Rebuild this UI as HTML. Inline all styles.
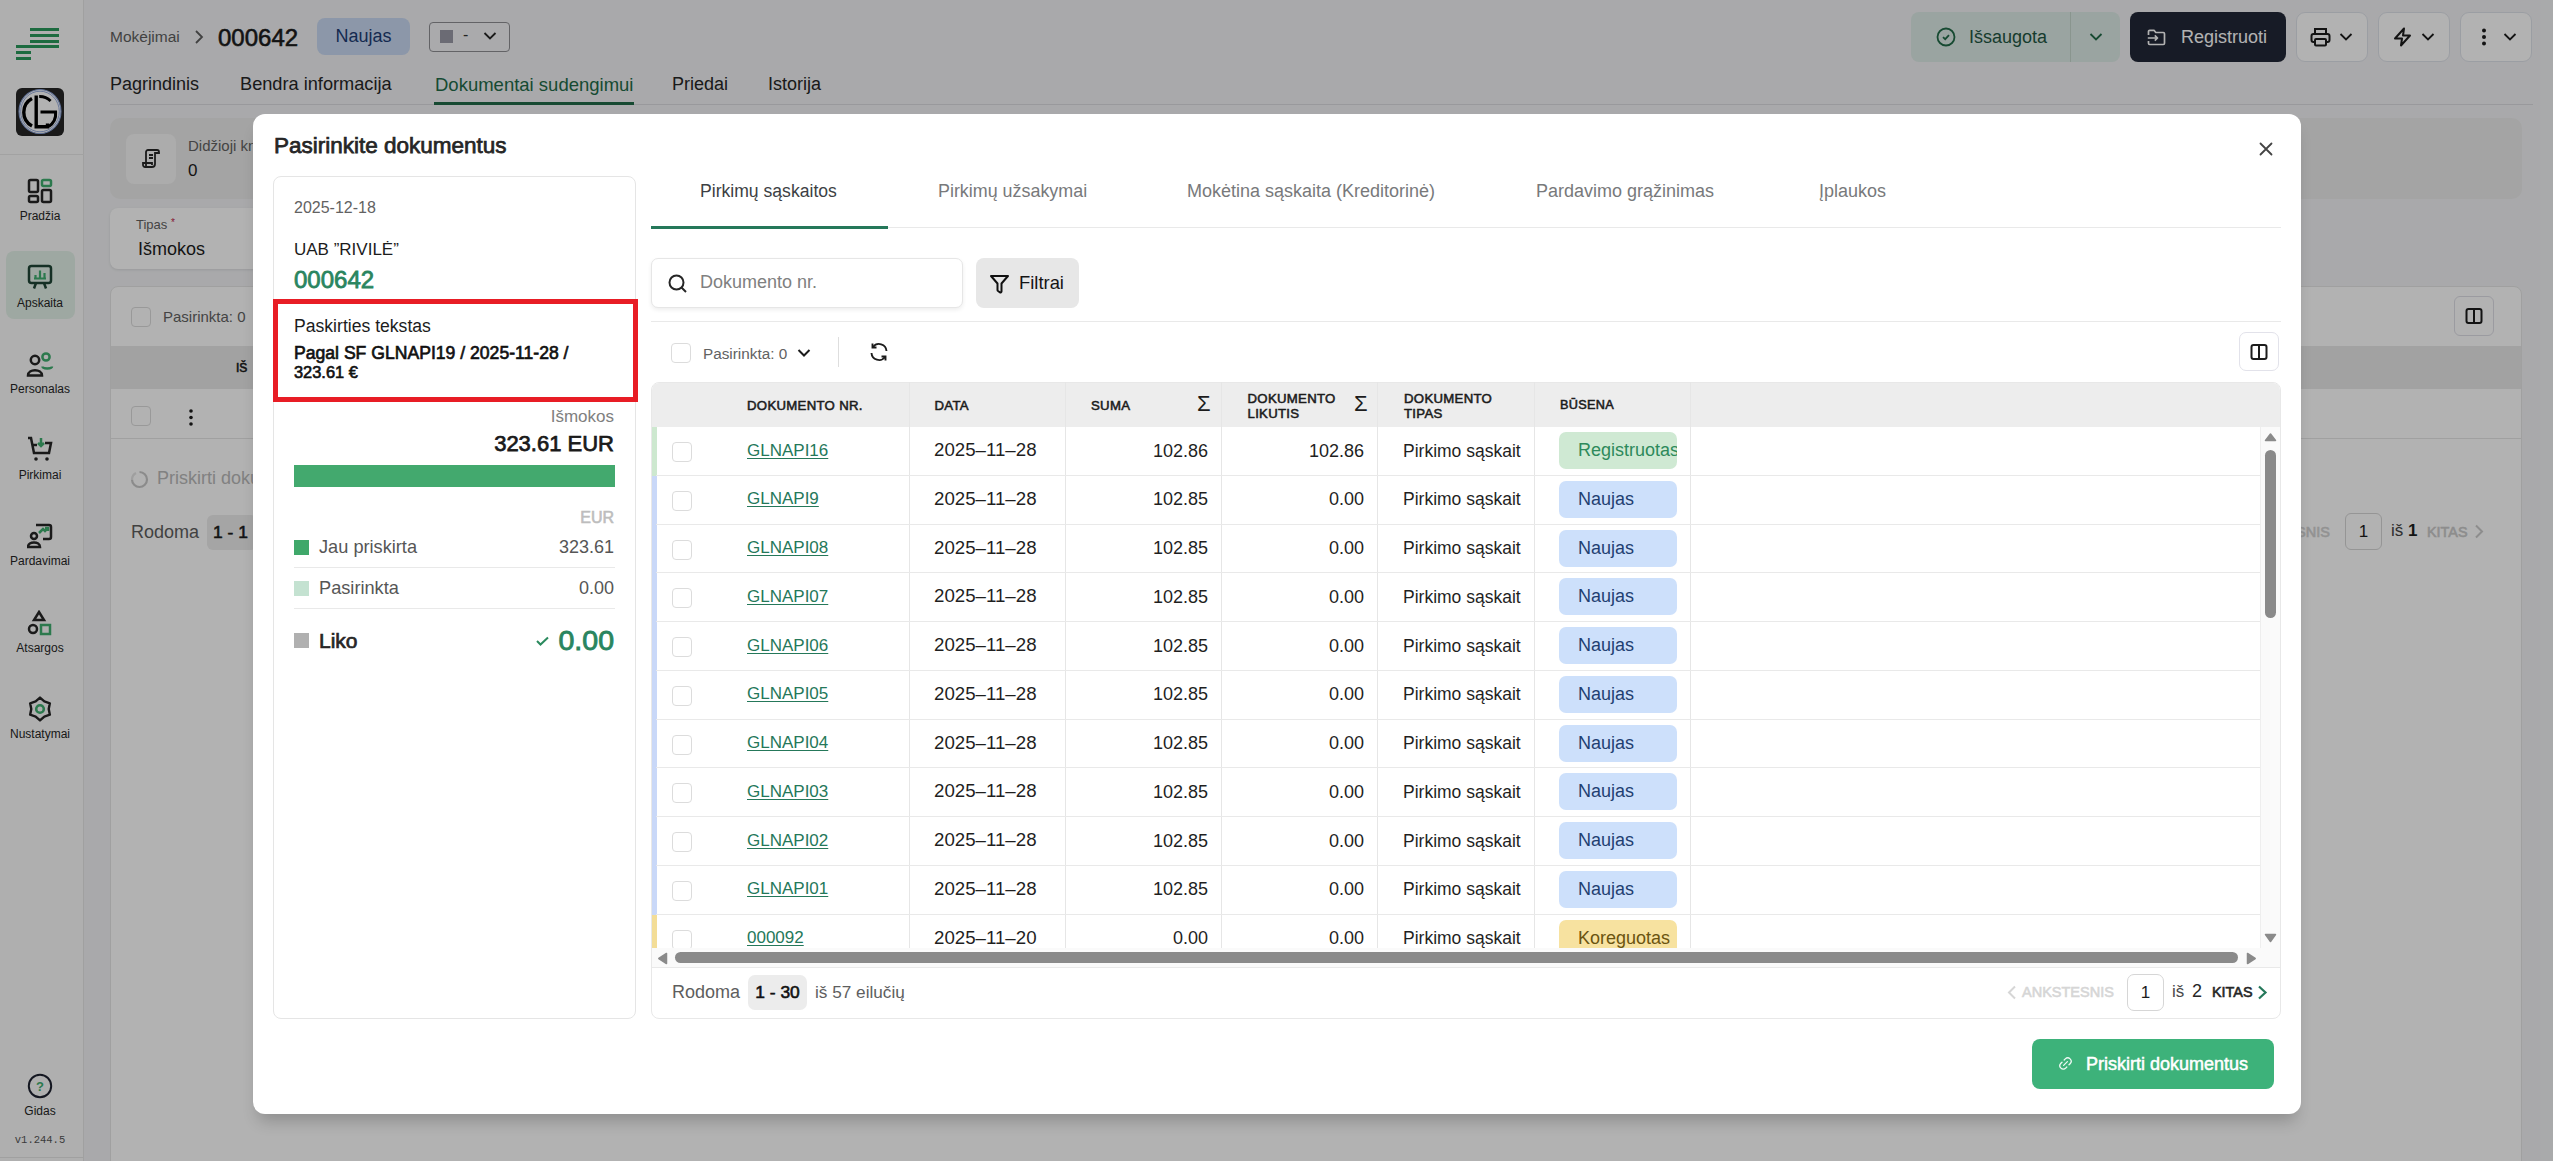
<!DOCTYPE html>
<html><head><meta charset="utf-8">
<style>
*{box-sizing:border-box;margin:0;padding:0}
html,body{width:2553px;height:1161px;overflow:hidden}
body{font-family:"Liberation Sans",sans-serif;background:#f2f3f5;position:relative;color:#1c1c1c}
.a{position:absolute;white-space:nowrap}
#side{left:0;top:0;width:84px;height:1161px;background:#fbfbfb;border-right:1px solid #e6e6e6}
.sl{font-size:12px;color:#262626;text-align:center;width:80px;left:0}
#overlay{left:0;top:0;width:2553px;height:1161px;background:rgba(0,0,0,0.3)}
#modal{left:253px;top:114px;width:2048px;height:1000px;background:#fff;border-radius:12px;box-shadow:0 12px 16px -5px rgba(0,0,0,.2)}
.card{background:#fff;border:1px solid #e5e5e5;border-radius:8px}
.hd{font-size:13.2px;color:#1c1c1c;letter-spacing:.3px;-webkit-text-stroke-width:0.55px}
.cell{font-size:17px;color:#1f1f1f}
.lnk{color:#25785a;text-decoration:underline;text-underline-offset:2px;text-decoration-thickness:1px}
.cb{width:20px;height:20px;border:1.5px solid #dcdcdc;border-radius:4px;background:#fff}
.badge{width:118px;height:37px;border-radius:7px;font-size:18px;padding-left:19px;line-height:37px;overflow:hidden}
.nj{background:#cfe0fb;color:#1d3d73}
.vl{width:1px;background:#e6e6e6}
.hl{height:1px;background:#e9e9e9}
</style></head>
<body>
<!-- ============ BACKGROUND PAGE ============ -->

<div class="a" id="side">
  <!-- logo -->
  <div class="a" style="left:30.3px;top:28px;width:28.6px;height:3px;background:#2a9a5c"></div>
  <div class="a" style="left:30.3px;top:34px;width:28.6px;height:3px;background:#2a9a5c"></div>
  <div class="a" style="left:30.3px;top:39.7px;width:28.6px;height:3px;background:#2a9a5c"></div>
  <div class="a" style="left:16px;top:45.3px;width:43px;height:3px;background:#2a9a5c"></div>
  <div class="a" style="left:16px;top:51px;width:14.7px;height:3px;background:#2a9a5c"></div>
  <div class="a" style="left:16px;top:56.8px;width:14.7px;height:3px;background:#2a9a5c"></div>
  <!-- avatar -->
  <svg class="a" style="left:16px;top:88px" width="48" height="48" viewBox="0 0 48 48">
    <rect x="0" y="0" width="48" height="48" rx="6" fill="#262626"/>
    <ellipse cx="24" cy="23.5" rx="21" ry="22" fill="#fff" stroke="#8aa3d9" stroke-width="1.1"/>
    <ellipse cx="24" cy="23.5" rx="19.3" ry="20.3" fill="none" stroke="#8aa3d9" stroke-width="0.9"/>
    <g fill="none" stroke="#000" stroke-width="3.4">
      <path d="M16 10.5 A15.6 15.6 0 0 0 16 38"/>
      <path d="M20.2 7.5 V38.7 H31.5 V35.5"/>
      <path d="M23.2 8.5 A15.5 15.5 0 0 1 34.6 13" stroke-width="2.8"/>
      <path d="M24.5 24.1 H39.6 A15.5 15.5 0 0 1 32.8 38.4" stroke-width="3"/>
    </g>
  </svg>
  <div class="a" style="left:0;top:154px;width:84px;height:1px;background:#e8e8e8"></div>
  <!-- nav -->
  <svg class="a" style="left:27px;top:178px" width="26" height="26" viewBox="0 0 26 26" fill="none" stroke-width="2.5">
    <rect x="2" y="2" width="9" height="12" rx="1.5" stroke="#262626"/><rect x="15" y="2" width="9" height="6" rx="1.5" stroke="#3fae6f"/>
    <rect x="2" y="18" width="9" height="6" rx="1.5" stroke="#262626"/><rect x="15" y="12" width="9" height="12" rx="1.5" stroke="#262626"/>
  </svg>
  <div class="a sl" style="top:209px">Pradžia</div>
  <div class="a" style="left:6px;top:251px;width:69px;height:68px;background:#e3f1e8;border-radius:8px"></div>
  <svg class="a" style="left:27px;top:264px" width="26" height="26" viewBox="0 0 26 26" fill="none" stroke-width="2.5">
    <rect x="2" y="2" width="22" height="17" rx="2.5" stroke="#1f4535"/><path d="M7 24.5 L9 19 M19 24.5 L17 19" stroke="#1f4535"/>
    <path d="M7 14.5 H19 M8.5 14.5 V11 M13 14.5 V6.5 M17.5 14.5 V9" stroke="#3fae6f" stroke-width="2.2"/>
  </svg>
  <div class="a sl" style="top:296px">Apskaita</div>
  <svg class="a" style="left:26px;top:351px" width="28" height="27" viewBox="0 0 28 27" fill="none" stroke-width="2.5">
    <circle cx="9" cy="9" r="4.2" stroke="#262626"/><path d="M2 24.5 C2 17.5 16 17.5 16 24.5 Z" stroke="#262626"/>
    <circle cx="20" cy="6" r="3.6" stroke="#3fae6f"/><path d="M16.5 15.5 C16.5 18 26 18 26 15.5" stroke="#3fae6f"/>
  </svg>
  <div class="a sl" style="top:382px">Personalas</div>
  <svg class="a" style="left:27px;top:436px" width="26" height="27" viewBox="0 0 26 27" fill="none" stroke-width="2.5">
    <path d="M1 2 H4 L7 17 H22 L24 7 H18" stroke="#262626"/><path d="M6 9 H10" stroke="#262626"/>
    <path d="M14 2 V10 M11 7 L14 10 L17 7" stroke="#3fae6f"/>
    <circle cx="9" cy="23" r="1.8" fill="#262626" stroke="none"/><circle cx="20" cy="23" r="1.8" fill="#262626" stroke="none"/>
  </svg>
  <div class="a sl" style="top:468px">Pirkimai</div>
  <svg class="a" style="left:27px;top:522px" width="26" height="27" viewBox="0 0 26 27" fill="none" stroke-width="2.5">
    <path d="M9 3 H22 A2 2 0 0 1 24 5 V15 A2 2 0 0 1 22 17 H16" stroke="#262626"/>
    <circle cx="7" cy="14" r="3" stroke="#262626"/><path d="M1 25 C1 19 13 19 13 25 Z" stroke="#262626"/>
    <path d="M12 11 L16 7 L18 9 L21 6 M18 6 H21 V9" stroke="#3fae6f"/>
  </svg>
  <div class="a sl" style="top:554px">Pardavimai</div>
  <svg class="a" style="left:27px;top:609.5px" width="26" height="27" viewBox="0 0 26 27" fill="none" stroke-width="2.5">
    <path d="M12 2 L17 10 H7 Z" stroke="#262626"/><circle cx="6" cy="19" r="4" stroke="#262626"/>
    <rect x="14" y="15" width="9" height="9" stroke="#3fae6f"/>
  </svg>
  <div class="a sl" style="top:641px">Atsargos</div>
  <svg class="a" style="left:27px;top:696px" width="26" height="26" viewBox="0 0 26 26" fill="none" stroke-width="2.4" stroke-linejoin="round">
    <path d="M13.00 1.60 L17.35 5.47 L22.87 7.30 L21.70 13.00 L22.87 18.70 L17.35 20.53 L13.00 24.40 L8.65 20.53 L3.13 18.70 L4.30 13.00 L3.13 7.30 L8.65 5.47 Z" stroke="#262626"/>
    <circle cx="13" cy="13" r="3.8" stroke="#3fae6f" stroke-width="2.6"/>
  </svg>
  <div class="a sl" style="top:727px">Nustatymai</div>
  <svg class="a" style="left:27px;top:1073px" width="26" height="26" viewBox="0 0 26 26" fill="none">
    <circle cx="13" cy="13" r="11.2" stroke="#1e2230" stroke-width="2"/>
    <text x="13" y="18" font-size="13" font-weight="bold" text-anchor="middle" fill="#3fae6f" font-family="Liberation Sans">?</text>
  </svg>
  <div class="a sl" style="top:1104px">Gidas</div>
  <div class="a sl" style="top:1134px;font-family:'Liberation Mono';font-size:10.5px;color:#555">v1.244.5</div>
</div>

<!-- header -->
<div class="a" style="left:110px;top:28px;font-size:15.5px;color:#5e5e5e">Mokėjimai</div>
<svg class="a" style="left:194px;top:30px" width="10" height="14" viewBox="0 0 10 14"><path d="M2 1 L8 7 L2 13" fill="none" stroke="#5e5e5e" stroke-width="1.8"/></svg>
<div class="a" style="left:218px;top:24px;font-size:24px;color:#1c1c1c;-webkit-text-stroke-width:0.6px">000642</div>
<div class="a" style="left:317px;top:18px;width:93px;height:37px;background:#c9d9f3;border-radius:8px;font-size:18px;color:#1d3d73;text-align:center;line-height:36px">Naujas</div>
<div class="a" style="left:429px;top:22px;width:81px;height:30px;border:1px solid #8e8e93;border-radius:4px;background:#f4f4f6"></div>
<div class="a" style="left:440px;top:30px;width:13px;height:13px;background:#9a9aa6"></div>
<div class="a" style="left:463px;top:26px;font-size:16px;color:#333">-</div>
<svg class="a" style="left:483px;top:31px" width="14" height="10" viewBox="0 0 14 10"><path d="M1.5 2 L7 7.5 L12.5 2" fill="none" stroke="#262626" stroke-width="1.8"/></svg>

<div class="a" style="left:110px;top:74px;font-size:18px;color:#262626">Pagrindinis</div>
<div class="a" style="left:240px;top:74px;font-size:18.2px;color:#262626">Bendra informacija</div>
<div class="a" style="left:435px;top:74px;font-size:18.5px;color:#226b48">Dokumentai sudengimui</div>
<div class="a" style="left:672px;top:74px;font-size:18px;color:#262626">Priedai</div>
<div class="a" style="left:768px;top:74px;font-size:18px;color:#262626">Istorija</div>
<div class="a" style="left:110px;top:104px;width:2423px;height:1px;background:#dcdce0"></div>
<div class="a" style="left:434px;top:101.5px;width:200px;height:3px;background:#226b48"></div>

<!-- right header buttons -->
<div class="a" style="left:1911px;top:12px;width:209px;height:50px;background:#ddebe7;border-radius:8px"></div>
<div class="a" style="left:2070px;top:12px;width:1px;height:50px;background:#c5d6cc"></div>
<svg class="a" style="left:1936px;top:27px" width="20" height="20" viewBox="0 0 20 20" fill="none" stroke="#226b48" stroke-width="1.8"><circle cx="10" cy="10" r="8.5"/><path d="M7 10.2 L9.2 12.2 L13 8.2"/></svg>
<div class="a" style="left:1969px;top:27px;font-size:18px;color:#1f5642">Išsaugota</div>
<svg class="a" style="left:2089px;top:32px" width="14" height="10" viewBox="0 0 14 10"><path d="M1.5 2 L7 7.5 L12.5 2" fill="none" stroke="#226b48" stroke-width="1.8"/></svg>
<div class="a" style="left:2130px;top:12px;width:156px;height:50px;background:#222837;border-radius:8px"></div>
<svg class="a" style="left:2147px;top:28.5px" width="19" height="17" viewBox="0 0 19 17" fill="none" stroke="#fff" stroke-width="1.7" stroke-linejoin="round"><path d="M1.5 6 V2.5 A1.2 1.2 0 0 1 2.7 1.3 H7 L8.8 3.5 H16.3 A1.2 1.2 0 0 1 17.5 4.7 V14.3 A1.2 1.2 0 0 1 16.3 15.5 H2.7 A1.2 1.2 0 0 1 1.5 14.3 V12"/><path d="M0.8 9 H10.5 M7.8 6.3 L10.5 9 L7.8 11.7"/></svg>
<div class="a" style="left:2181px;top:27px;font-size:18px;color:#fff">Registruoti</div>
<div class="a" style="left:2296px;top:12px;width:72px;height:50px;background:#fff;border:1px solid #dfe3ea;border-radius:9px"></div>
<svg class="a" style="left:2310px;top:27px" width="21" height="20" viewBox="0 0 21 20" fill="none" stroke="#1c1c1c" stroke-width="2"><path d="M5 7 V2 H16 V7"/><rect x="1.5" y="7" width="18" height="8" rx="2"/><rect x="5" y="12" width="11" height="6.5" rx="1" fill="#fff"/></svg>
<svg class="a" style="left:2339px;top:32px" width="14" height="10" viewBox="0 0 14 10"><path d="M1.5 2 L7 7.5 L12.5 2" fill="none" stroke="#1c1c1c" stroke-width="1.8"/></svg>
<div class="a" style="left:2378px;top:12px;width:72px;height:50px;background:#fff;border:1px solid #dfe3ea;border-radius:9px"></div>
<svg class="a" style="left:2393px;top:27px" width="19" height="20" viewBox="0 0 19 20" fill="none" stroke="#1c1c1c" stroke-width="2" stroke-linejoin="round"><path d="M11 1.5 L2 11.5 H9 L8 18.5 L17 8.5 H10 Z"/></svg>
<svg class="a" style="left:2421px;top:32px" width="14" height="10" viewBox="0 0 14 10"><path d="M1.5 2 L7 7.5 L12.5 2" fill="none" stroke="#1c1c1c" stroke-width="1.8"/></svg>
<div class="a" style="left:2460px;top:12px;width:72px;height:50px;background:#fff;border:1px solid #dfe3ea;border-radius:9px"></div>
<svg class="a" style="left:2480px;top:27px" width="8" height="20" viewBox="0 0 8 20" fill="#1c1c1c"><circle cx="4" cy="3.5" r="2"/><circle cx="4" cy="10" r="2"/><circle cx="4" cy="16.5" r="2"/></svg>
<svg class="a" style="left:2503px;top:32px" width="14" height="10" viewBox="0 0 14 10"><path d="M1.5 2 L7 7.5 L12.5 2" fill="none" stroke="#1c1c1c" stroke-width="1.8"/></svg>

<!-- bg cards -->
<div class="a" style="left:110px;top:118px;width:2412px;height:81px;background:#ebebeb;border-radius:10px"></div>
<div class="a" style="left:126px;top:134px;width:50px;height:50px;background:#f6f6f6;border-radius:8px"></div>
<svg class="a" style="left:141px;top:148px" width="20" height="22" viewBox="0 0 20 22" fill="none" stroke="#262626" stroke-width="1.8"><path d="M5 18 V4 A2 2 0 0 1 7 2 H16 A2 2 0 0 1 18 4 V5 H14 M14 4 V16 A3 3 0 0 1 11 19 H4 A2 2 0 0 1 2 17 V15 H11 V17"/><path d="M8 7 H12 M8 10 H12"/></svg>
<div class="a" style="left:188px;top:137px;font-size:15px;color:#626262">Didžioji knyga</div>
<div class="a" style="left:188px;top:160.5px;font-size:17px;color:#1c1c1c">0</div>
<div class="a" style="left:110px;top:208px;width:500px;height:61px;background:#fff;border-radius:8px;box-shadow:0 1px 3px rgba(0,0,0,.1)"></div>
<div class="a" style="left:136px;top:217px;font-size:13px;color:#626262">Tipas <span style="color:#c0254b;font-size:10px;vertical-align:top">*</span></div>
<div class="a" style="left:138px;top:238.5px;font-size:18px;color:#1c1c1c">Išmokos</div>
<div class="a" style="left:110px;top:286px;width:2412px;height:900px;background:#fff;border-radius:8px;border:1px solid #e6e6e6"></div>
<div class="a cb" style="left:131px;top:307px"></div>
<div class="a" style="left:163px;top:308px;font-size:15px;color:#626262">Pasirinkta: 0</div>
<div class="a" style="left:2454px;top:296px;width:40px;height:40px;border:1px solid #dedee6;border-radius:6px"></div>
<svg class="a" style="left:2465px;top:307px" width="18" height="18" viewBox="0 0 18 18" fill="none" stroke="#1c1c1c" stroke-width="2"><rect x="1.5" y="2" width="15" height="14" rx="2"/><path d="M9 2 V16"/></svg>
<div class="a" style="left:111px;top:346px;width:2410px;height:43px;background:#e9e9e9"></div>
<div class="a" style="left:236px;top:361px;font-size:12px;color:#1c1c1c;-webkit-text-stroke-width:0.6px">IŠ</div>
<div class="a cb" style="left:131px;top:406px"></div>
<svg class="a" style="left:187px;top:408px" width="8" height="20" viewBox="0 0 8 20" fill="#1c1c1c"><circle cx="4" cy="3" r="1.8"/><circle cx="4" cy="9.5" r="1.8"/><circle cx="4" cy="16" r="1.8"/></svg>
<div class="a" style="left:111px;top:438px;width:2410px;height:1px;background:#e6e6e6"></div>
<svg class="a" style="left:130px;top:470px" width="19" height="19" viewBox="0 0 19 19" fill="none" stroke="#c8c8c8" stroke-width="2.2"><path d="M9.5 2 A7.5 7.5 0 1 1 2 9.5"/><path d="M2 9.5 A7.5 7.5 0 0 1 6 3" stroke="#e4e4e4"/></svg>
<div class="a" style="left:157px;top:468px;font-size:18px;color:#b9b9b9">Priskirti dokumentai</div>
<div class="a" style="left:131px;top:522px;font-size:18px;color:#5e5e5e">Rodoma</div>
<div class="a" style="left:207px;top:515px;width:50px;height:35px;background:#ececec;border-radius:6px;font-size:17.4px;color:#1c1c1c;line-height:34px;padding-left:6px;-webkit-text-stroke-width:0.6px">1 - 1</div>
<div class="a" style="left:2238px;top:524px;font-size:14.5px;color:#d2d2d2;-webkit-text-stroke-width:0.6px">ANKSTESNIS</div>
<div class="a" style="left:2345px;top:513px;width:37px;height:37px;border:1px solid #d6d6d6;border-radius:6px;background:#fff;font-size:17px;text-align:center;line-height:35px;color:#1c1c1c">1</div>
<div class="a" style="left:2391px;top:521px;font-size:17px;color:#444">iš <b style="color:#1c1c1c">1</b></div>
<div class="a" style="left:2427px;top:524px;font-size:14.4px;color:#cacaca;-webkit-text-stroke-width:0.6px">KITAS</div>
<svg class="a" style="left:2474px;top:524px" width="10" height="15" viewBox="0 0 10 15"><path d="M2 1.5 L8 7.5 L2 13.5" fill="none" stroke="#cacaca" stroke-width="2"/></svg>
<div class="a" style="left:0;top:1157px;width:84px;height:1px;background:#e6e6e6"></div>


<div class="a" id="overlay"></div>

<!-- ============ MODAL ============ -->

<div class="a" id="modal"></div>
<div class="a" style="left:274px;top:133px;font-size:22.5px;color:#262626;-webkit-text-stroke-width:0.75px">Pasirinkite dokumentus</div>
<svg class="a" style="left:2259px;top:142px" width="14" height="14" viewBox="0 0 14 14"><path d="M1.5 1.5 L12.5 12.5 M12.5 1.5 L1.5 12.5" stroke="#444" stroke-width="1.8" stroke-linecap="round"/></svg>

<!-- left card -->
<div class="a card" style="left:273px;top:176px;width:363px;height:843px"></div>
<div class="a" style="left:294px;top:199px;font-size:16px;color:#626262">2025-12-18</div>
<div class="a" style="left:294px;top:240px;font-size:17px;color:#1c1c1c">UAB ”RIVILĖ”</div>
<div class="a" style="left:294px;top:266px;font-size:24px;color:#2a8560;-webkit-text-stroke-width:0.8px">000642</div>
<div class="a" style="left:273px;top:299px;width:365px;height:103px;border:5px solid #e81d25"></div>
<div class="a" style="left:294px;top:316px;font-size:17.6px;color:#1c1c1c">Paskirties tekstas</div>
<div class="a" style="left:294px;top:343px;font-size:17.6px;color:#111;-webkit-text-stroke-width:0.65px">Pagal SF GLNAPI19 / 2025-11-28 /</div>
<div class="a" style="left:294px;top:363px;font-size:16.4px;color:#111;-webkit-text-stroke-width:0.65px">323.61 €</div>
<div class="a" style="right:1939px;top:407px;font-size:17px;color:#808080">Išmokos</div>
<div class="a" style="right:1939px;top:431px;font-size:22px;color:#1a1a1a;-webkit-text-stroke-width:0.75px">323.61 EUR</div>
<div class="a" style="left:294px;top:465px;width:321px;height:22px;background:#43a96e"></div>
<div class="a" style="right:1939px;top:509px;font-size:16px;color:#bdbdbd;-webkit-text-stroke-width:0.6px">EUR</div>
<div class="a" style="left:294px;top:540px;width:15px;height:15px;background:#3fa86a"></div>
<div class="a" style="left:319px;top:537px;font-size:18.2px;color:#565656">Jau priskirta</div>
<div class="a" style="right:1939px;top:537px;font-size:18px;color:#565656">323.61</div>
<div class="a hl" style="left:294px;top:567px;width:321px"></div>
<div class="a" style="left:294px;top:581px;width:15px;height:15px;background:#c4e2d1"></div>
<div class="a" style="left:319px;top:578px;font-size:18.2px;color:#565656">Pasirinkta</div>
<div class="a" style="right:1939px;top:578px;font-size:18px;color:#565656">0.00</div>
<div class="a hl" style="left:294px;top:608px;width:321px"></div>
<div class="a" style="left:294px;top:633px;width:15px;height:15px;background:#b0b0b0"></div>
<div class="a" style="left:319px;top:629px;font-size:21px;color:#262626;-webkit-text-stroke-width:0.7px">Liko</div>
<svg class="a" style="left:536px;top:636px" width="13" height="10" viewBox="0 0 13 10"><path d="M1 5 L4.5 8.5 L12 1.5" fill="none" stroke="#2b8a5e" stroke-width="2"/></svg>
<div class="a" style="right:1939px;top:624px;font-size:28.5px;color:#2a8560;-webkit-text-stroke-width:0.9px">0.00</div>

<!-- tabs -->
<div class="a" style="left:700px;top:181px;font-size:17.6px;color:#3d3f44">Pirkimų sąskaitos</div>
<div class="a" style="left:938px;top:181px;font-size:17.9px;color:#78797b">Pirkimų užsakymai</div>
<div class="a" style="left:1187px;top:181px;font-size:18px;color:#78797b">Mokėtina sąskaita (Kreditorinė)</div>
<div class="a" style="left:1536px;top:181px;font-size:18px;color:#78797b">Pardavimo grąžinimas</div>
<div class="a" style="left:1819px;top:181px;font-size:18px;color:#78797b">Įplaukos</div>
<div class="a hl" style="left:651px;top:227px;width:1630px"></div>
<div class="a" style="left:651px;top:226px;width:237px;height:3px;background:#25785a"></div>

<!-- search -->
<div class="a" style="left:651px;top:258px;width:312px;height:50px;border:1px solid #e6e6e6;border-radius:7px;box-shadow:0 2px 4px rgba(0,0,0,.07);background:#fff"></div>
<svg class="a" style="left:668px;top:274px" width="20" height="19" viewBox="0 0 20 19" fill="none" stroke="#262626" stroke-width="2"><circle cx="8.5" cy="8.5" r="7"/><path d="M13.5 13.5 L18 18"/></svg>
<div class="a" style="left:700px;top:272px;font-size:18px;color:#808080">Dokumento nr.</div>
<div class="a" style="left:976px;top:258px;width:103px;height:50px;background:#e7e7e7;border-radius:8px"></div>
<svg class="a" style="left:989px;top:274px" width="21" height="20" viewBox="0 0 21 20" fill="none" stroke="#111" stroke-width="2" stroke-linejoin="round" stroke-linecap="round"><path d="M2 2 H19 L12.5 9.5 V17.5 A1 1 0 0 1 11 18.3 L9 17 A1 1 0 0 1 8.5 16 V9.5 Z"/></svg>
<div class="a" style="left:1019px;top:272px;font-size:18.4px;color:#151515">Filtrai</div>
<div class="a hl" style="left:651px;top:321px;width:1630px"></div>

<!-- toolbar -->
<div class="a cb" style="left:671px;top:343px"></div>
<div class="a" style="left:703px;top:345px;font-size:15.3px;color:#626262">Pasirinkta: 0</div>
<svg class="a" style="left:797px;top:348px" width="14" height="10" viewBox="0 0 14 10"><path d="M1.5 2 L7 7.5 L12.5 2" fill="none" stroke="#1c1c1c" stroke-width="2"/></svg>
<div class="a" style="left:838px;top:337px;width:1px;height:30px;background:#dedede"></div>
<svg class="a" style="left:869px;top:342px;transform:scaleX(-1)" width="20" height="20" viewBox="0 0 20 20" fill="none" stroke="#1c1c1c" stroke-width="1.9"><path d="M2.5 9 A7.5 7.5 0 0 1 16 5 M17.5 11 A7.5 7.5 0 0 1 4 15"/><path d="M16.5 1.5 V5.5 H12.5 M3.5 18.5 V14.5 H7.5"/></svg>
<div class="a" style="left:2239px;top:332px;width:40px;height:39px;border:1px solid #e2e2ea;border-radius:7px"></div>
<svg class="a" style="left:2250px;top:343px" width="18" height="18" viewBox="0 0 18 18" fill="none" stroke="#1c1c1c" stroke-width="2"><rect x="1.5" y="2" width="15" height="14" rx="2"/><path d="M9 2 V16"/></svg>

<!-- table -->
<div class="a" style="left:651px;top:382px;width:1630px;height:637px;border:1px solid #e8e8e8;border-radius:8px;overflow:hidden">
  <div class="a" style="left:0;top:0;width:1630px;height:43.5px;background:#ededed"></div>
</div>
<div class="a vl" style="left:908.5px;top:382px;height:566px"></div>
<div class="a vl" style="left:1064.5px;top:382px;height:566px"></div>
<div class="a vl" style="left:1221px;top:382px;height:566px"></div>
<div class="a vl" style="left:1377px;top:382px;height:566px"></div>
<div class="a vl" style="left:1534px;top:382px;height:566px"></div>
<div class="a vl" style="left:1690px;top:382px;height:566px"></div>
<div class="a hd" style="left:747px;top:398px">DOKUMENTO NR.</div>
<div class="a hd" style="left:934.5px;top:398px">DATA</div>
<div class="a hd" style="left:1091px;top:398px">SUMA</div>
<div class="a" style="left:1197px;top:391px;font-size:22px;color:#1c1c1c">Σ</div>
<div class="a hd" style="left:1247.5px;top:391px;line-height:15px">DOKUMENTO<br>LIKUTIS</div>
<div class="a" style="left:1354px;top:391px;font-size:22px;color:#1c1c1c">Σ</div>
<div class="a hd" style="left:1404px;top:391px;line-height:15px">DOKUMENTO<br>TIPAS</div>
<div class="a hd" style="left:1560px;top:398px;font-size:12.7px">BŪSENA</div>
<div class="a" style="left:651px;top:427px;width:1610px;height:521px;overflow:hidden">
<div class="a" style="left:-651px;top:-427px;width:2553px;height:1161px">
<div class="a" style="left:652px;top:427.00px;width:5px;height:48.75px;background:#cde8cf"></div>
<div class="a cb" style="left:672px;top:442.00px"></div>
<div class="a cell lnk" style="left:747px;top:440.50px">GLNAPI16</div>
<div class="a cell" style="left:934px;top:439.00px;font-size:18.7px">2025–11–28</div>
<div class="a cell" style="right:1345px;top:440.50px;font-size:18px">102.86</div>
<div class="a cell" style="right:1189px;top:440.50px;font-size:18px">102.86</div>
<div class="a cell" style="left:1403px;top:440.50px;font-size:17.5px">Pirkimo sąskait</div>
<div class="a badge" style="left:1559px;top:432.00px;background:#cfe9d3;color:#2d8a5b">Registruotas</div>
<div class="a hl" style="left:656px;top:474.75px;width:1604px"></div>
<div class="a" style="left:652px;top:475.75px;width:5px;height:48.75px;background:#c9d8f8"></div>
<div class="a cb" style="left:672px;top:490.75px"></div>
<div class="a cell lnk" style="left:747px;top:489.25px">GLNAPI9</div>
<div class="a cell" style="left:934px;top:487.75px;font-size:18.7px">2025–11–28</div>
<div class="a cell" style="right:1345px;top:489.25px;font-size:18px">102.85</div>
<div class="a cell" style="right:1189px;top:489.25px;font-size:18px">0.00</div>
<div class="a cell" style="left:1403px;top:489.25px;font-size:17.5px">Pirkimo sąskait</div>
<div class="a badge" style="left:1559px;top:480.75px;background:#cde0fb;color:#1f3f72">Naujas</div>
<div class="a hl" style="left:656px;top:523.50px;width:1604px"></div>
<div class="a" style="left:652px;top:524.50px;width:5px;height:48.75px;background:#c9d8f8"></div>
<div class="a cb" style="left:672px;top:539.50px"></div>
<div class="a cell lnk" style="left:747px;top:538.00px">GLNAPI08</div>
<div class="a cell" style="left:934px;top:536.50px;font-size:18.7px">2025–11–28</div>
<div class="a cell" style="right:1345px;top:538.00px;font-size:18px">102.85</div>
<div class="a cell" style="right:1189px;top:538.00px;font-size:18px">0.00</div>
<div class="a cell" style="left:1403px;top:538.00px;font-size:17.5px">Pirkimo sąskait</div>
<div class="a badge" style="left:1559px;top:529.50px;background:#cde0fb;color:#1f3f72">Naujas</div>
<div class="a hl" style="left:656px;top:572.25px;width:1604px"></div>
<div class="a" style="left:652px;top:573.25px;width:5px;height:48.75px;background:#c9d8f8"></div>
<div class="a cb" style="left:672px;top:588.25px"></div>
<div class="a cell lnk" style="left:747px;top:586.75px">GLNAPI07</div>
<div class="a cell" style="left:934px;top:585.25px;font-size:18.7px">2025–11–28</div>
<div class="a cell" style="right:1345px;top:586.75px;font-size:18px">102.85</div>
<div class="a cell" style="right:1189px;top:586.75px;font-size:18px">0.00</div>
<div class="a cell" style="left:1403px;top:586.75px;font-size:17.5px">Pirkimo sąskait</div>
<div class="a badge" style="left:1559px;top:578.25px;background:#cde0fb;color:#1f3f72">Naujas</div>
<div class="a hl" style="left:656px;top:621.00px;width:1604px"></div>
<div class="a" style="left:652px;top:622.00px;width:5px;height:48.75px;background:#c9d8f8"></div>
<div class="a cb" style="left:672px;top:637.00px"></div>
<div class="a cell lnk" style="left:747px;top:635.50px">GLNAPI06</div>
<div class="a cell" style="left:934px;top:634.00px;font-size:18.7px">2025–11–28</div>
<div class="a cell" style="right:1345px;top:635.50px;font-size:18px">102.85</div>
<div class="a cell" style="right:1189px;top:635.50px;font-size:18px">0.00</div>
<div class="a cell" style="left:1403px;top:635.50px;font-size:17.5px">Pirkimo sąskait</div>
<div class="a badge" style="left:1559px;top:627.00px;background:#cde0fb;color:#1f3f72">Naujas</div>
<div class="a hl" style="left:656px;top:669.75px;width:1604px"></div>
<div class="a" style="left:652px;top:670.75px;width:5px;height:48.75px;background:#c9d8f8"></div>
<div class="a cb" style="left:672px;top:685.75px"></div>
<div class="a cell lnk" style="left:747px;top:684.25px">GLNAPI05</div>
<div class="a cell" style="left:934px;top:682.75px;font-size:18.7px">2025–11–28</div>
<div class="a cell" style="right:1345px;top:684.25px;font-size:18px">102.85</div>
<div class="a cell" style="right:1189px;top:684.25px;font-size:18px">0.00</div>
<div class="a cell" style="left:1403px;top:684.25px;font-size:17.5px">Pirkimo sąskait</div>
<div class="a badge" style="left:1559px;top:675.75px;background:#cde0fb;color:#1f3f72">Naujas</div>
<div class="a hl" style="left:656px;top:718.50px;width:1604px"></div>
<div class="a" style="left:652px;top:719.50px;width:5px;height:48.75px;background:#c9d8f8"></div>
<div class="a cb" style="left:672px;top:734.50px"></div>
<div class="a cell lnk" style="left:747px;top:733.00px">GLNAPI04</div>
<div class="a cell" style="left:934px;top:731.50px;font-size:18.7px">2025–11–28</div>
<div class="a cell" style="right:1345px;top:733.00px;font-size:18px">102.85</div>
<div class="a cell" style="right:1189px;top:733.00px;font-size:18px">0.00</div>
<div class="a cell" style="left:1403px;top:733.00px;font-size:17.5px">Pirkimo sąskait</div>
<div class="a badge" style="left:1559px;top:724.50px;background:#cde0fb;color:#1f3f72">Naujas</div>
<div class="a hl" style="left:656px;top:767.25px;width:1604px"></div>
<div class="a" style="left:652px;top:768.25px;width:5px;height:48.75px;background:#c9d8f8"></div>
<div class="a cb" style="left:672px;top:783.25px"></div>
<div class="a cell lnk" style="left:747px;top:781.75px">GLNAPI03</div>
<div class="a cell" style="left:934px;top:780.25px;font-size:18.7px">2025–11–28</div>
<div class="a cell" style="right:1345px;top:781.75px;font-size:18px">102.85</div>
<div class="a cell" style="right:1189px;top:781.75px;font-size:18px">0.00</div>
<div class="a cell" style="left:1403px;top:781.75px;font-size:17.5px">Pirkimo sąskait</div>
<div class="a badge" style="left:1559px;top:773.25px;background:#cde0fb;color:#1f3f72">Naujas</div>
<div class="a hl" style="left:656px;top:816.00px;width:1604px"></div>
<div class="a" style="left:652px;top:817.00px;width:5px;height:48.75px;background:#c9d8f8"></div>
<div class="a cb" style="left:672px;top:832.00px"></div>
<div class="a cell lnk" style="left:747px;top:830.50px">GLNAPI02</div>
<div class="a cell" style="left:934px;top:829.00px;font-size:18.7px">2025–11–28</div>
<div class="a cell" style="right:1345px;top:830.50px;font-size:18px">102.85</div>
<div class="a cell" style="right:1189px;top:830.50px;font-size:18px">0.00</div>
<div class="a cell" style="left:1403px;top:830.50px;font-size:17.5px">Pirkimo sąskait</div>
<div class="a badge" style="left:1559px;top:822.00px;background:#cde0fb;color:#1f3f72">Naujas</div>
<div class="a hl" style="left:656px;top:864.75px;width:1604px"></div>
<div class="a" style="left:652px;top:865.75px;width:5px;height:48.75px;background:#c9d8f8"></div>
<div class="a cb" style="left:672px;top:880.75px"></div>
<div class="a cell lnk" style="left:747px;top:879.25px">GLNAPI01</div>
<div class="a cell" style="left:934px;top:877.75px;font-size:18.7px">2025–11–28</div>
<div class="a cell" style="right:1345px;top:879.25px;font-size:18px">102.85</div>
<div class="a cell" style="right:1189px;top:879.25px;font-size:18px">0.00</div>
<div class="a cell" style="left:1403px;top:879.25px;font-size:17.5px">Pirkimo sąskait</div>
<div class="a badge" style="left:1559px;top:870.75px;background:#cde0fb;color:#1f3f72">Naujas</div>
<div class="a hl" style="left:656px;top:913.50px;width:1604px"></div>
<div class="a" style="left:652px;top:914.50px;width:5px;height:48.75px;background:#f3dd97"></div>
<div class="a cb" style="left:672px;top:929.50px"></div>
<div class="a cell lnk" style="left:747px;top:928.00px">000092</div>
<div class="a cell" style="left:934px;top:926.50px;font-size:18.7px">2025–11–20</div>
<div class="a cell" style="right:1345px;top:928.00px;font-size:18px">0.00</div>
<div class="a cell" style="right:1189px;top:928.00px;font-size:18px">0.00</div>
<div class="a cell" style="left:1403px;top:928.00px;font-size:17.5px">Pirkimo sąskait</div>
<div class="a badge" style="left:1559px;top:919.50px;background:#f7e2a0;color:#6b5410">Koreguotas</div>
</div>
</div>
<!-- v scrollbar -->
<div class="a" style="left:2260px;top:427px;width:20px;height:521px;background:#fafafa;border-left:1px solid #eee"></div><div class="a" style="left:652px;top:948px;width:1628px;height:19px;background:#fafafa"></div>
<svg class="a" style="left:2264px;top:432px" width="13" height="10" viewBox="0 0 13 10"><path d="M6.5 2 L11.5 8.5 H1.5 Z" fill="#8a8a8a" stroke="#8a8a8a" stroke-width="1.5" stroke-linejoin="round"/></svg>
<div class="a" style="left:2265px;top:450px;width:11px;height:168px;background:#8a8a8a;border-radius:6px"></div>
<svg class="a" style="left:2264px;top:933px" width="13" height="10" viewBox="0 0 13 10"><path d="M6.5 8.5 L11.5 1.5 H1.5 Z" fill="#8a8a8a" stroke="#8a8a8a" stroke-width="1.5" stroke-linejoin="round"/></svg>
<!-- h scrollbar -->
<svg class="a" style="left:657px;top:952px" width="11" height="13" viewBox="0 0 11 13"><path d="M1.8 6.5 L9.5 1.5 V11.5 Z" fill="#8a8a8a" stroke="#8a8a8a" stroke-width="1.5" stroke-linejoin="round"/></svg>
<div class="a" style="left:675px;top:952px;width:1563px;height:11px;background:#8a8a8a;border-radius:6px"></div>
<svg class="a" style="left:2246px;top:952px" width="11" height="13" viewBox="0 0 11 13"><path d="M9.2 6.5 L1.5 1.5 V11.5 Z" fill="#8a8a8a" stroke="#8a8a8a" stroke-width="1.5" stroke-linejoin="round"/></svg>
<div class="a hl" style="left:652px;top:967px;width:1628px"></div>

<!-- footer -->
<div class="a" style="left:672px;top:982px;font-size:18px;color:#5e5e5e">Rodoma</div>
<div class="a" style="left:748px;top:975px;width:59px;height:35px;background:#ececec;border-radius:7px;font-size:17.4px;color:#111;text-align:center;line-height:35px;-webkit-text-stroke-width:0.6px">1 - 30</div>
<div class="a" style="left:815px;top:982px;font-size:17.2px;color:#5e5e5e">iš 57 eilučių</div>
<svg class="a" style="left:2007px;top:985px" width="10" height="15" viewBox="0 0 10 15"><path d="M8 1.5 L2 7.5 L8 13.5" fill="none" stroke="#d6d6d6" stroke-width="2"/></svg>
<div class="a" style="left:2022px;top:984px;font-size:14.5px;color:#d6d6d6;-webkit-text-stroke-width:0.6px">ANKSTESNIS</div>
<div class="a" style="left:2127px;top:974px;width:37px;height:37px;border:1px solid #d6d6d6;border-radius:7px;font-size:17px;text-align:center;line-height:35px;color:#1c1c1c">1</div>
<div class="a" style="left:2172px;top:982px;font-size:17px;color:#4a4a4a">iš</div>
<div class="a" style="left:2192px;top:981px;font-size:18px;color:#262626">2</div>
<div class="a" style="left:2212px;top:984px;font-size:14.4px;color:#262626;-webkit-text-stroke-width:0.6px">KITAS</div>
<svg class="a" style="left:2257px;top:985px" width="11" height="15" viewBox="0 0 11 15"><path d="M2 1.5 L8.5 7.5 L2 13.5" fill="none" stroke="#25785a" stroke-width="2.2"/></svg>

<!-- assign button -->
<div class="a" style="left:2032px;top:1039px;width:242px;height:50px;background:#3db27a;border-radius:8px"></div>
<svg class="a" style="left:2059px;top:1056.5px" width="13" height="13" viewBox="0 0 13 13" fill="none" stroke="#fff" stroke-opacity=".92" stroke-width="1.3" stroke-linecap="round"><path d="M5.2 3 L6.3 1.9 A2.7 2.7 0 0 1 11.1 6.7 L10 7.8"/><path d="M7.8 10 L6.7 11.1 A2.7 2.7 0 0 1 1.9 6.3 L3 5.2"/><path d="M4.6 8.4 L8.4 4.6"/></svg>
<div class="a" style="left:2086px;top:1054px;font-size:18px;color:#fff;-webkit-text-stroke-width:0.5px">Priskirti dokumentus</div>

</body></html>
